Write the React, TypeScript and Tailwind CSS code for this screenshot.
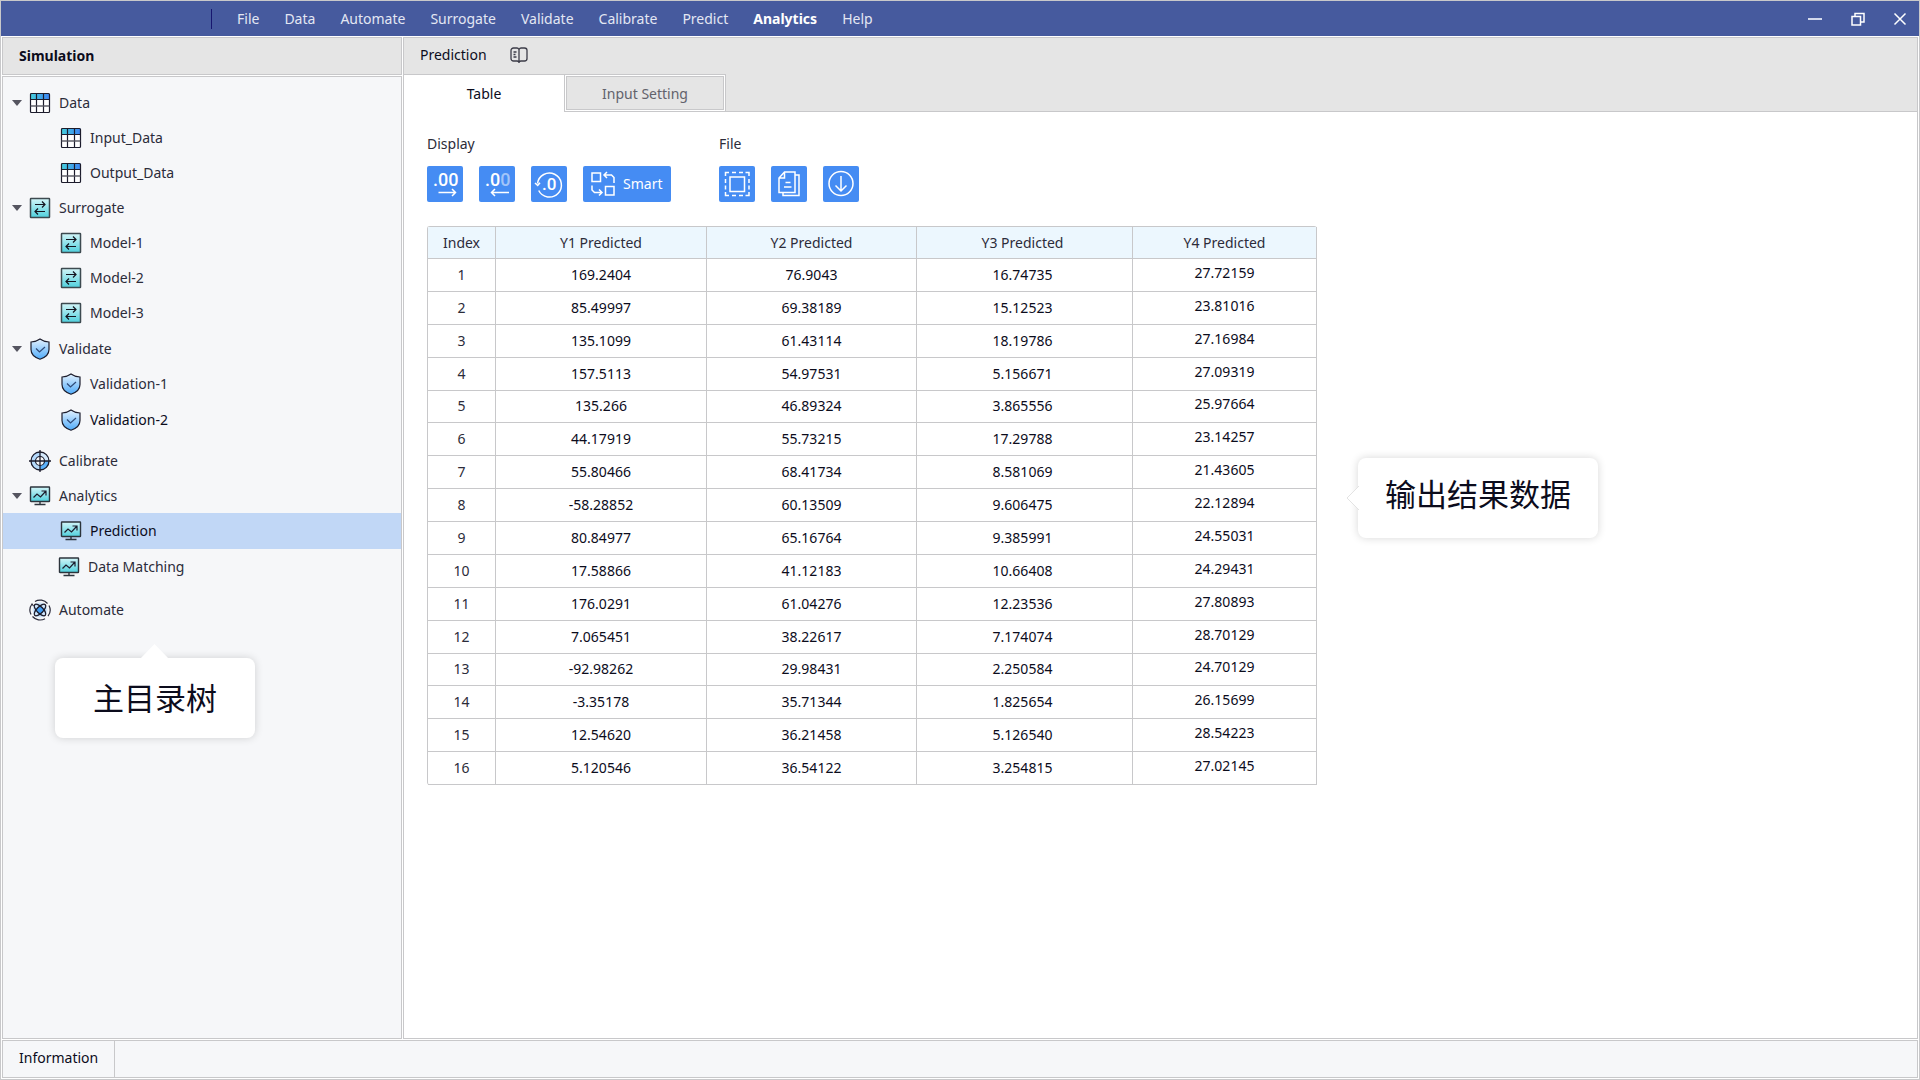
import React from 'react';
import clsx from 'clsx';

const MENU = ['File', 'Data', 'Automate', 'Surrogate', 'Validate', 'Calibrate', 'Predict', 'Analytics', 'Help'];

type IconName = 'data' | 'surrogate' | 'validate' | 'calibrate' | 'analytics' | 'automate';

interface TreeGroup {
    label: string;
    icon: IconName;
    items: string[];
    className?: string;
}

const TREE: TreeGroup[] = [
    { label: 'Data', icon: 'data', items: ['Input_Data', 'Output_Data'] },
    { label: 'Surrogate', icon: 'surrogate', items: ['Model-1', 'Model-2', 'Model-3'] },
    { label: 'Validate', icon: 'validate', items: ['Validation-1', 'Validation-2'], className: 'py-px' },
    { label: 'Calibrate', icon: 'calibrate', items: [], className: 'pt-1' },
    { label: 'Analytics', icon: 'analytics', items: ['Prediction', 'Data Matching'] },
    { label: 'Automate', icon: 'automate', items: [], className: 'pt-2' },
];

const ROWS = [
    ['169.2404', '76.9043', '16.74735', '27.72159'],
    ['85.49997', '69.38189', '15.12523', '23.81016'],
    ['135.1099', '61.43114', '18.19786', '27.16984'],
    ['157.5113', '54.97531', '5.156671', '27.09319'],
    ['135.266', '46.89324', '3.865556', '25.97664'],
    ['44.17919', '55.73215', '17.29788', '23.14257'],
    ['55.80466', '68.41734', '8.581069', '21.43605'],
    ['-58.28852', '60.13509', '9.606475', '22.12894'],
    ['80.84977', '65.16764', '9.385991', '24.55031'],
    ['17.58866', '41.12183', '10.66408', '24.29431'],
    ['176.0291', '61.04276', '12.23536', '27.80893'],
    ['7.065451', '38.22617', '7.174074', '28.70129'],
    ['-92.98262', '29.98431', '2.250584', '24.70129'],
    ['-3.35178', '35.71344', '1.825654', '26.15699'],
    ['12.54620', '36.21458', '5.126540', '28.54223'],
    ['5.120546', '36.54122', '3.254815', '27.02145'],
];

const TreeIcon = ({ name }: { name: IconName }) => {
    switch (name) {
        case 'data':
            return (
                <svg width="22" height="22" viewBox="0 0 22 22" fill="none">
                    <rect x="1.5" y="1.5" width="19" height="19" rx="1" fill="#fff" />
                    <rect x="1.5" y="1.5" width="19" height="6" fill="url(#gradHead)" />
                    <rect x="1.5" y="1.5" width="19" height="19" rx="1" stroke="#1c1c2c" strokeWidth="1.2" />
                    <path d="M1.5 7.5h19M7.5 1.5v19M14.5 1.5v19" stroke="#1c1c2c" strokeWidth="1.2" />
                    <path d="M1.5 14h19" stroke="#55555f" strokeWidth="1.4" />
                </svg>
            );
        case 'surrogate':
            return (
                <svg width="22" height="22" viewBox="0 0 22 22" fill="none">
                    <rect x="1.5" y="1.5" width="19" height="19" rx="0.5" fill="url(#gradTeal)" stroke="#3d4a50" strokeWidth="1.5" />
                    <path d="M6 7.5h10M13 4.5l3 3-3 3M16 14.5H6M9 11.5l-3 3 3 3" stroke="#14141f" strokeWidth="1.2" />
                </svg>
            );
        case 'validate':
            return (
                <svg width="22" height="22" viewBox="0 0 22 22" fill="none">
                    <path d="M11 1c2.7 2 5.7 2.7 9 3v7.500c0 4.800-3.700 8-9 9.700-5.300-1.700-9-4.900-9-9.700V4c3.300-.3 6.300-1 9-3z" fill="url(#gradBlue)" stroke="#1c1c2c" strokeWidth="1.2" />
                    <path d="M7 10.500l3.500 3.500 5.500-5" stroke="#2f4a78" strokeWidth="1.2" />
                </svg>
            );
        case 'calibrate':
            return (
                <svg width="22" height="22" viewBox="0 0 22 22" fill="none">
                    <circle cx="11" cy="11" r="9" fill="#d5eafd" />
                    <path d="M2 11a9 9 0 0 1 9-9v9zM11 20v-9H2a9 9 0 0 0 9 9z" fill="#b5dafc" />
                    <path d="M11 20a9 9 0 0 0 9-9h-9z" fill="#5db2fb" />
                    <circle cx="11" cy="11" r="4.5" fill="#f6f7f9" />
                    <circle cx="11" cy="11" r="9" stroke="#1c1c2c" strokeWidth="1.3" />
                    <circle cx="11" cy="11" r="4.5" stroke="#1c1c2c" strokeWidth="1.2" />
                    <path d="M11 0v22M0 11h22" stroke="#1c1c2c" strokeWidth="1.3" />
                </svg>
            );
        case 'analytics':
            return (
                <svg width="22" height="22" viewBox="0 0 22 22" fill="none">
                    <rect x="1.5" y="2" width="19" height="14.5" rx="0.5" fill="url(#gradTeal)" stroke="#2c343c" strokeWidth="1.4" />
                    <path d="M4.5 12.5L8 9l3.5 3 5-5.500M12.500 6H17v4.500" stroke="#1c1c2c" strokeWidth="1.2" />
                    <path d="M11 16.500v3M5.500 19.500h11" stroke="#2c343c" strokeWidth="1.4" />
                </svg>
            );
        case 'automate':
            return (
                <svg width="22" height="22" viewBox="0 0 22 22" fill="none">
                    <circle cx="11" cy="11" r="7.5" fill="#cfe6fc" />
                    <circle cx="11" cy="11" r="3.5" fill="#3f9df5" />
                    <ellipse cx="11" cy="11" rx="7.5" ry="3.2" transform="rotate(45 11 11)" stroke="#1c1c2c" strokeWidth="1.3" />
                    <ellipse cx="11" cy="11" rx="7.5" ry="3.2" transform="rotate(-45 11 11)" stroke="#1c1c2c" strokeWidth="1.3" />
                    <path d="M6 2.400A10 10 0 0 1 18.500 4.500M20 6.500a10 10 0 0 1-1 10.700M16 19.700A10 10 0 0 1 3.500 17.500M2 15.500A10 10 0 0 1 3 5l1.500 2" stroke="#2c2c3c" strokeWidth="1.2" />
                </svg>
            );
    }
};

const Gradients = () => (
    <svg width="0" height="0" className="absolute" aria-hidden="true">
        <defs>
            <linearGradient id="gradHead" x1="0" y1="0" x2="1" y2="0">
                <stop offset="0" stopColor="#45cfdc" />
                <stop offset="1" stopColor="#3c84f5" />
            </linearGradient>
            <linearGradient id="gradTeal" x1="0" y1="0" x2="0" y2="1">
                <stop offset="0" stopColor="#d3f5f8" />
                <stop offset="1" stopColor="#4fd0dd" />
            </linearGradient>
            <linearGradient id="gradBlue" x1="0" y1="0" x2="0" y2="1">
                <stop offset="0" stopColor="#e3f1fe" />
                <stop offset="1" stopColor="#4fabfa" />
            </linearGradient>
        </defs>
    </svg>
);

const Tree = () => (
    <ul className="pt-2">
        {TREE.map((group) => (
            <li key={group.label} className={group.className}>
                <button type="button" className="flex h-[35px] w-full items-center pl-[9px] text-left">
                    <span className="w-[17px]">
                        {group.items.length > 0 && (
                            <svg width="10" height="6" viewBox="0 0 10 6">
                                <path d="M0 0h10L5 6z" fill="#555560" />
                            </svg>
                        )}
                    </span>
                    <TreeIcon name={group.icon} />
                    <span className="ml-2">{group.label}</span>
                </button>
                {group.items.length > 0 && (
                    <ul>
                        {group.items.map((item) => (
                            <li key={item}>
                                <button
                                    type="button"
                                    className={clsx(
                                        'flex w-full items-center gap-2 text-left',
                                        group.icon === 'validate' || item === 'Prediction' ? 'h-9' : 'h-[35px]',
                                        item === 'Data Matching' ? 'pl-[55px]' : 'pl-[57px]',
                                        item === 'Prediction' && 'bg-[#c1d7f6] text-[#0c0c1c]',
                                        item === 'Validation-2' && 'text-[#0c0c1c]'
                                    )}
                                >
                                    <TreeIcon name={group.icon} />
                                    <span>{item}</span>
                                </button>
                            </li>
                        ))}
                    </ul>
                )}
            </li>
        ))}
    </ul>
);

interface ToolButtonProps {
    label: string;
    children: React.ReactNode;
}

const ToolButton: React.FC<ToolButtonProps> = ({ label, children }) => (
    <button type="button" aria-label={label} className="size-9 rounded-xs bg-[#458cf3]">
        <svg width="36" height="36" viewBox="0 0 36 36" fill="none" stroke="#fff" strokeWidth="1.5">
            {children}
        </svg>
    </button>
);

const digits = { fontFamily: 'Roboto', fontWeight: 500, fill: '#fff', stroke: 'none' };

const Toolbar = () => (
    <div className="flex gap-12">
        <section>
            <h2 className="mb-3 leading-5">Display</h2>
            <div className="flex gap-4">
                <ToolButton label="Increase decimals">
                    <text x="6" y="20" fontSize="18" {...digits}>.00</text>
                    <path d="M11.500 26.500h17M25 23l3.500 3.500L25 30" />
                </ToolButton>
                <ToolButton label="Decrease decimals">
                    <text x="6" y="20" fontSize="18" {...digits}>
                        .0<tspan fillOpacity="0.5">0</tspan>
                    </text>
                    <path d="M30 26.500H12.500M16 23l-3.500 3.500L16 30" />
                </ToolButton>
                <ToolButton label="Reset decimals">
                    <path d="M6.500 17.500a12 12 0 1 1 1.200 7M4 17l2.700 2.500L9 16.800" />
                    <text x="11" y="24" fontSize="17" {...digits}>.0</text>
                </ToolButton>
                <button type="button" className="flex h-9 w-[88px] items-center rounded-xs bg-[#458cf3] text-white">
                    <svg width="40" height="36" viewBox="0 0 40 36" fill="none" stroke="#fff" strokeWidth="1.5">
                        <path d="M9 7h8.500v8.500H9zM22.500 20.500H31V29h-8.500zM31 17v-5.500L28.500 9H21M24 6l-3 3 3 3M9 19.500V24l2.500 2.500H19M16 23.500l3 3-3 3" />
                    </svg>
                    <span>Smart</span>
                </button>
            </div>
        </section>
        <section>
            <h2 className="mb-3 leading-5">File</h2>
            <div className="flex gap-4">
                <ToolButton label="Select all">
                    <path d="M11 11h14.500v14.500H11z" />
                    <path d="M6.500 10V6.500H10M13 6.500h4M20 6.500h4M26.500 6.500H30V10M30 13v4M30 19.500v4M30 26v3.500h-3.500M24 29.500h-4M17 29.500h-4M10 29.500H6.500V26M6.500 23.500v-4M6.500 17v-4" />
                </ToolButton>
                <ToolButton label="Copy">
                    <path d="M13.500 6H24v20.500H8V12zM13.500 6v6H8M24 9h4v20.500H12V26.500M14.500 16.500h5M13 21h7.500" />
                </ToolButton>
                <ToolButton label="Download">
                    <circle cx="18" cy="17.500" r="12" />
                    <path d="M18 10v15M12.500 19.500L18 25l5.500-5.500" />
                </ToolButton>
            </div>
        </section>
    </div>
);

const ResultTable = () => (
    <table className="mt-6 h-[559px] w-[890px] table-fixed border-separate border-spacing-0 rounded-[3px] border-t border-l border-[#c8c8ca] text-center">
        <colgroup>
            <col className="w-[68px]" />
            <col className="w-[211px]" />
            <col className="w-[210px]" />
            <col className="w-[216px]" />
            <col />
        </colgroup>
        <thead>
            <tr>
                {['Index', 'Y1 Predicted', 'Y2 Predicted', 'Y3 Predicted', 'Y4 Predicted'].map((h, col) => (
                    <th
                        key={h}
                        scope="col"
                        className={clsx('h-8 border-r border-b border-[#c8c8ca] bg-[#ecf7fe] p-0 font-normal text-[#2c2c3a]', col === 3 && 'pr-1')}
                    >
                        {h}
                    </th>
                ))}
            </tr>
        </thead>
        <tbody className="text-[#0c0c1c]">
            {ROWS.map((row, idx) => (
                <tr key={idx}>
                    <td className="h-8 border-r border-b border-[#c8c8ca] p-0 text-[#2c2c3a]">{idx + 1}</td>
                    {row.map((value, col) => (
                        <td
                            key={col}
                            className={clsx('h-8 border-r border-b border-[#c8c8ca] p-0', col === 2 && 'pr-1', col === 3 && 'pb-1')}
                        >
                            {value}
                        </td>
                    ))}
                </tr>
            ))}
        </tbody>
    </table>
);

export default function App() {
    return (
        <div className="flex min-h-screen flex-col border border-[#c8c8ca] bg-white font-['Noto_Sans','Noto_Sans_CJK_SC',sans-serif] text-sm text-[#2c2c3a]">
            <Gradients />

            {/* Title bar */}
            <header className="flex h-[35px] items-center bg-[#465a9e] text-[#e3e7f3]">
                <nav className="ml-[210px] flex h-5 items-center gap-[25px] border-l border-[#17176f] pl-[25px]">
                    {MENU.map((item) => (
                        <button key={item} type="button" className={clsx(item === 'Analytics' && 'font-bold text-white')}>
                            {item}
                        </button>
                    ))}
                </nav>
                <div className="mr-3 ml-auto flex items-center gap-[27px]">
                    <button type="button" aria-label="Minimize">
                        <svg width="16" height="16" viewBox="0 0 16 16" fill="none" stroke="#d3d9ec" strokeWidth="2">
                            <path d="M1 8h14" />
                        </svg>
                    </button>
                    <button type="button" aria-label="Restore">
                        <svg width="16" height="16" viewBox="0 0 16 16" fill="none" stroke="#fff" strokeWidth="1.5">
                            <path d="M2 5.500h8.500V14H2zM5 5.500V2.500h9V11h-3.500" />
                        </svg>
                    </button>
                    <button type="button" aria-label="Close">
                        <svg width="14" height="14" viewBox="0 0 14 14" fill="none" stroke="#fff" strokeWidth="1.5">
                            <path d="M1.500 1.500l11 11M12.500 1.500l-11 11" />
                        </svg>
                    </button>
                </div>
            </header>

            <div className="flex flex-1 gap-px px-px pt-px">
                <aside className="flex w-[400px] flex-col gap-px">
                    <h1 className="flex h-[38px] items-center border border-[#c8c8ca] bg-[#e5e5e5] pl-4 font-bold text-[#0c0c1c]">
                        Simulation
                    </h1>
                    <div className="relative flex-1 border border-[#c8c8ca] bg-[#f6f7f9]">
                        <Tree />
                        <div className="absolute top-[581px] left-[52px] flex h-20 w-[200px] items-center justify-center rounded-lg bg-white text-[31px] text-[#0c0c1c] shadow-[0_0_8px_rgba(0,0,0,0.16)]">
                            <svg className="absolute -top-3.5 left-[85px]" width="29" height="15" viewBox="0 0 29 15">
                                <path d="M0 15L14.500 0 29 15z" fill="#fff" />
                            </svg>
                            主目录树
                        </div>
                    </div>
                </aside>

                <main className="flex flex-1 flex-col border border-[#c8c8ca]">
                    <div className="flex h-9 items-center gap-[23px] bg-[#e5e5e5] pb-0.5 pl-4 text-[#0c0c1c]">
                        <span>Prediction</span>
                        <svg width="18" height="16" viewBox="0 0 18 16" fill="none" stroke="#3c3c48" strokeWidth="1.3">
                            <path d="M9 2.500C8.500 1.500 8 1 7 1H3.500a2.500 2.500 0 0 0-2.500 2.500v8A2.500 2.500 0 0 0 3.500 14H7c1 0 1.500.3 2 1 .5-.7 1-1 2-1h3.500a2.500 2.500 0 0 0 2.500-2.500v-8A2.500 2.500 0 0 0 14.500 1H11c-1 0-1.500.5-2 1.500zM9 1.500V16" />
                            <path d="M3.500 5h3M3.500 7.500h2M3.500 10h3" />
                        </svg>
                    </div>
                    <div className="flex h-[38px] bg-[#e5e5e5]" role="tablist">
                        <button type="button" role="tab" aria-selected="true" className="w-40 border-t border-[#c8c8ca] bg-white text-[#0c0c1c]">
                            Table
                        </button>
                        <button type="button" role="tab" aria-selected="false" className="w-[162px] border border-[#c8c8ca] bg-white p-px text-[#62626c]">
                            <span className="flex h-full items-center justify-center border border-[#c8c8ca] bg-[#e5e5e5] pt-0.5">
                                Input Setting
                            </span>
                        </button>
                        <span className="flex-1 border-b border-[#c8c8ca]" />
                    </div>
                    <div className="relative flex-1 pt-[22px] pl-[23px]">
                        <Toolbar />
                        <ResultTable />
                        <div className="absolute top-[346px] left-[954px] flex h-20 w-60 items-center justify-center rounded-lg bg-white pb-2 text-[31px] text-[#0c0c1c] shadow-[0_0_8px_rgba(0,0,0,0.16)]">
                            <svg className="absolute top-[28px] -left-[11px]" width="12" height="24" viewBox="0 0 12 24">
                                <path d="M12 0v24L0 12z" fill="#fff" />
                                <path d="M12 0L0 12l12 12" fill="none" stroke="#e3e3e3" />
                            </svg>
                            输出结果数据
                        </div>
                    </div>
                </main>
            </div>

            <footer className="m-px flex h-[38px] border border-[#c8c8ca] bg-[#f6f7f9] text-[#0c0c1c]">
                <button type="button" className="border-r border-[#c8c8ca] px-4 pb-0.5">
                    Information
                </button>
            </footer>
        </div>
    );
}
